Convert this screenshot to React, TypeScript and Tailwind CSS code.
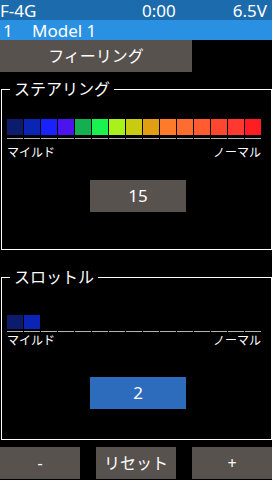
const font = { fontFamily: '"Noto Sans", "Noto Sans CJK JP", sans-serif' };

const steeringColors = [
  '#0c1b6c', '#0a24b4', '#1a22fb', '#4b14ef', '#12b04e', '#19f24f', '#a9f11a', '#c9cb12',
  '#e19e12', '#ff7b2a', '#ff6c30', '#ff5d30', '#ff4730', '#ff3830', '#ff1c22',
];

function Bar({ filled, height, gap }: { filled: number; height: string; gap: string }) {
  return (
    <div className="flex gap-px pl-[5px]">
      {steeringColors.map((c, i) => (
        <div key={i} className="flex w-[16px] flex-col">
          <div className={height} style={{ backgroundColor: i < filled ? c : 'transparent' }} />
          <div className={`${gap} h-px bg-[#b4b4b4]`} />
        </div>
      ))}
    </div>
  );
}

function Labels({ className }: { className: string }) {
  return (
    <div className={`flex justify-between pl-[5px] pr-[10px] text-[12px] leading-4 text-white ${className}`}>
      <span>マイルド</span>
      <span>ノーマル</span>
    </div>
  );
}

export default function App() {
  return (
    <div className="h-[480px] w-[272px] overflow-hidden bg-black text-white" style={font}>
      <div className="flex h-[20px] items-center bg-[#1c6bad] text-[17px] leading-none">
        <span className="w-[142px]">F-4G</span>
        <span>0:00</span>
        <span className="ml-auto pr-[5px]">6.5V</span>
      </div>
      <div className="flex h-[20px] items-center bg-[#2a90e1] text-[17px] leading-none">
        <span className="w-[32px] pl-[3px]">1</span>
        <span>Model 1</span>
      </div>
      <div className="flex h-[32px] w-[192px] items-center justify-center bg-[#58524f] text-[16px]">
        フィーリング
      </div>

      <fieldset className="ml-px mt-[7px] w-[271px] border border-white">
        <legend className="ml-[8px] px-[4px] text-[16px] leading-5">ステアリング</legend>
        <div className="mt-[20px]">
          <Bar filled={15} height="h-[16px]" gap="mt-[3px]" />
        </div>
        <Labels className="mt-[6px]" />
        <div className="ml-[88px] mt-[19px] mb-[37px] flex h-[32px] w-[96px] items-center justify-center bg-[#58524f] text-[17px]">
          15
        </div>
      </fieldset>

      <fieldset className="ml-px mt-[17px] w-[271px] border border-white">
        <legend className="ml-[8px] px-[4px] text-[16px] leading-5">スロットル</legend>
        <div className="mt-[28px]">
          <Bar filled={2} height="h-[14px]" gap="mt-[2px]" />
        </div>
        <Labels className="mt-[1px]" />
        <div className="ml-[88px] mt-[28px] mb-[30px] flex h-[32px] w-[96px] items-center justify-center bg-[#2d6bbd] text-[17px]">
          2
        </div>
      </fieldset>

      <div className="mt-[7px] flex h-[32px] justify-between text-[16px]">
        <div className="flex w-[80px] items-center justify-center bg-[#58524f]">-</div>
        <div className="flex w-[80px] items-center justify-center bg-[#58524f]">リセット</div>
        <div className="flex w-[80px] items-center justify-center bg-[#58524f]">+</div>
      </div>
    </div>
  );
}
